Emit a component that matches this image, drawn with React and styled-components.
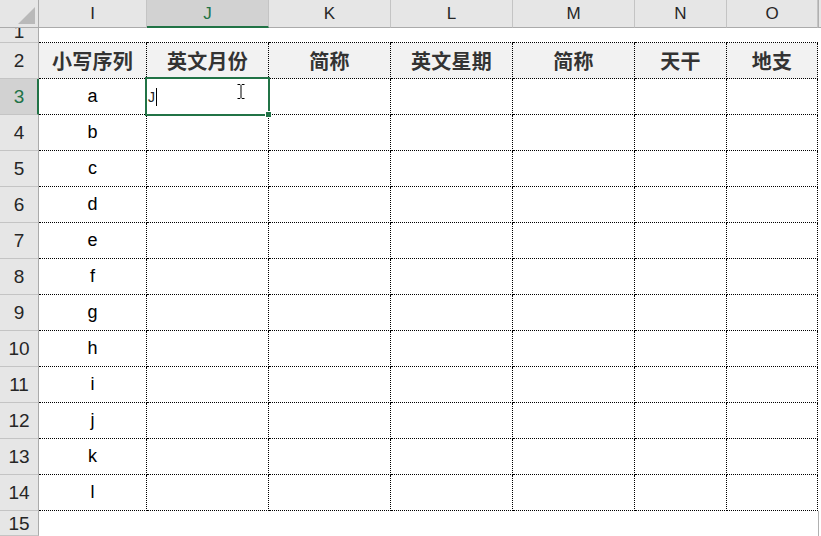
import React from "react";
import styled, { createGlobalStyle } from "styled-components";

const GlobalStyle = createGlobalStyle`
  html, body {
    margin: 0;
    padding: 0;
    background: #fff;
    overflow: hidden;
  }
  #root {
    height: 100vh;
  }
`;

const GREEN = "#217346";

const Sheet = styled.div`
  display: grid;
  grid-template-columns: 39px 108px 122px 122px 122px 122px 92px 91px 1fr;
  grid-template-rows: 28px 15px repeat(13, 36px) 1fr;
  height: 100vh;
  width: 100%;
  font-family: "Liberation Sans", Arial, sans-serif;
  color: #000;
`;

const Corner = styled.div`
  position: relative;
  background: #e6e6e6;
  border-right: 1px solid #ababab;
  border-bottom: 1px solid #ababab;
  box-sizing: border-box;

  &::after {
    content: "";
    position: absolute;
    right: 3px;
    bottom: 3px;
    width: 0;
    height: 0;
    border-left: 17px solid transparent;
    border-bottom: 17px solid #b9b9b9;
  }
`;

const ColHead = styled.div`
  box-sizing: border-box;
  display: flex;
  align-items: center;
  justify-content: center;
  background: ${(p) => (p.$active ? "#d2d2d2" : "#e6e6e6")};
  color: ${(p) => (p.$active ? GREEN : "#262626")};
  border-right: 1px solid #c4c4c4;
  border-bottom: ${(p) => (p.$active ? `2px solid ${GREEN}` : "1px solid #ababab")};
  font-size: 17px;
  padding-top: ${(p) => (p.$active ? "1px" : "0")};
`;

const RowHead = styled.div`
  box-sizing: border-box;
  display: flex;
  align-items: ${(p) => (p.$tiny ? "flex-end" : "center")};
  justify-content: center;
  background: ${(p) => (p.$active ? "#d2d2d2" : "#e6e6e6")};
  color: ${(p) => (p.$active ? GREEN : "#262626")};
  border-right: ${(p) => (p.$active ? `2px solid ${GREEN}` : "1px solid #ababab")};
  border-bottom: 1px solid #c4c4c4;
  font-size: 19px;
  line-height: 1;
  overflow: hidden;
  padding-left: ${(p) => (p.$active ? "1px" : "0")};
  padding-bottom: ${(p) => (p.$tiny ? "1px" : "0")};
`;

const Cell = styled.div`
  box-sizing: border-box;
  position: relative;
  display: flex;
  align-items: center;
  justify-content: ${(p) => (p.$left ? "flex-start" : "center")};
  background: ${(p) => (p.$head ? "#f2f2f2" : "#fff")};
  border-right: ${(p) => (p.$boxed ? "1px dotted #000" : "none")};
  border-bottom: ${(p) => (p.$boxed || p.$topEdge ? "1px dotted #000" : "none")};
  font-size: 18px;
  ${(p) =>
    p.$head &&
    `
    font-family: "Noto Sans CJK SC", "Noto Sans", sans-serif;
    font-weight: 700;
    font-size: 20px;
    color: #333;
    letter-spacing: 0.3px;
  `}
`;

const Filler = styled.div`
  box-sizing: border-box;
  border-left: ${(p) => (p.$line ? "1px solid #b0b0b0" : "none")};
  background: ${(p) => (p.$header ? "#e6e6e6" : "#fff")};
  border-bottom: ${(p) => (p.$header ? "1px solid #ababab" : "none")};
`;

const Selection = styled.div`
  position: absolute;
  top: -2px;
  left: -2px;
  right: -2px;
  bottom: -2px;
  border: 2px solid ${GREEN};
  z-index: 2;
  pointer-events: none;
`;

const FillHandle = styled.div`
  position: absolute;
  right: -4px;
  bottom: -4px;
  width: 5px;
  height: 5px;
  background: ${GREEN};
  border: 1px solid #fff;
`;

const EditText = styled.span`
  display: flex;
  align-items: center;
  padding-left: 1px;
  font-size: 14px;
  color: #222;
`;

const Caret = styled.span`
  display: inline-block;
  width: 1px;
  height: 18px;
  margin-left: 1px;
  background: #000;
`;

const Pointer = styled.svg`
  position: absolute;
  left: 89px;
  top: 4px;
  z-index: 3;
`;

const columns = ["I", "J", "K", "L", "M", "N", "O"];
const titles = ["小写序列", "英文月份", "简称", "英文星期", "简称", "天干", "地支"];
const letters = ["a", "b", "c", "d", "e", "f", "g", "h", "i", "j", "k", "l"];

const IBeam = () => (
  <Pointer width="10" height="17" viewBox="0 0 10 17">
    <path d="M1.5 1.5h2.5M6 1.5h2.5M5 1.5v14M1.5 15.5h2.5M6 15.5h2.5" stroke="#000" strokeWidth="1" fill="none" />
  </Pointer>
);

export default function App() {
  return (
    <>
      <GlobalStyle />
      <Sheet>
        <Corner />
        {columns.map((c) => (
          <ColHead key={c} $active={c === "J"}>
            {c}
          </ColHead>
        ))}
        <Filler $header $line />

        <RowHead $tiny>1</RowHead>
        {columns.map((c) => (
          <Cell key={c} $topEdge />
        ))}
        <Filler />

        <RowHead>2</RowHead>
        {titles.map((t, i) => (
          <Cell key={i} $boxed $head>
            {t}
          </Cell>
        ))}
        <Filler />

        {letters.map((l, r) => {
          const rowNum = r + 3;
          return (
            <React.Fragment key={l}>
              <RowHead $active={rowNum === 3}>{rowNum}</RowHead>
              {columns.map((c, ci) => {
                if (ci === 0) {
                  return (
                    <Cell key={c} $boxed>
                      {l}
                    </Cell>
                  );
                }
                if (rowNum === 3 && c === "J") {
                  return (
                    <Cell key={c} $boxed $left>
                      <EditText>
                        J<Caret />
                      </EditText>
                      <Selection>
                        <FillHandle />
                      </Selection>
                      <IBeam />
                    </Cell>
                  );
                }
                return <Cell key={c} $boxed />;
              })}
              <Filler />
            </React.Fragment>
          );
        })}

        <RowHead>15</RowHead>
        {columns.map((c) => (
          <Cell key={c} />
        ))}
        <Filler $line />
      </Sheet>
    </>
  );
}
